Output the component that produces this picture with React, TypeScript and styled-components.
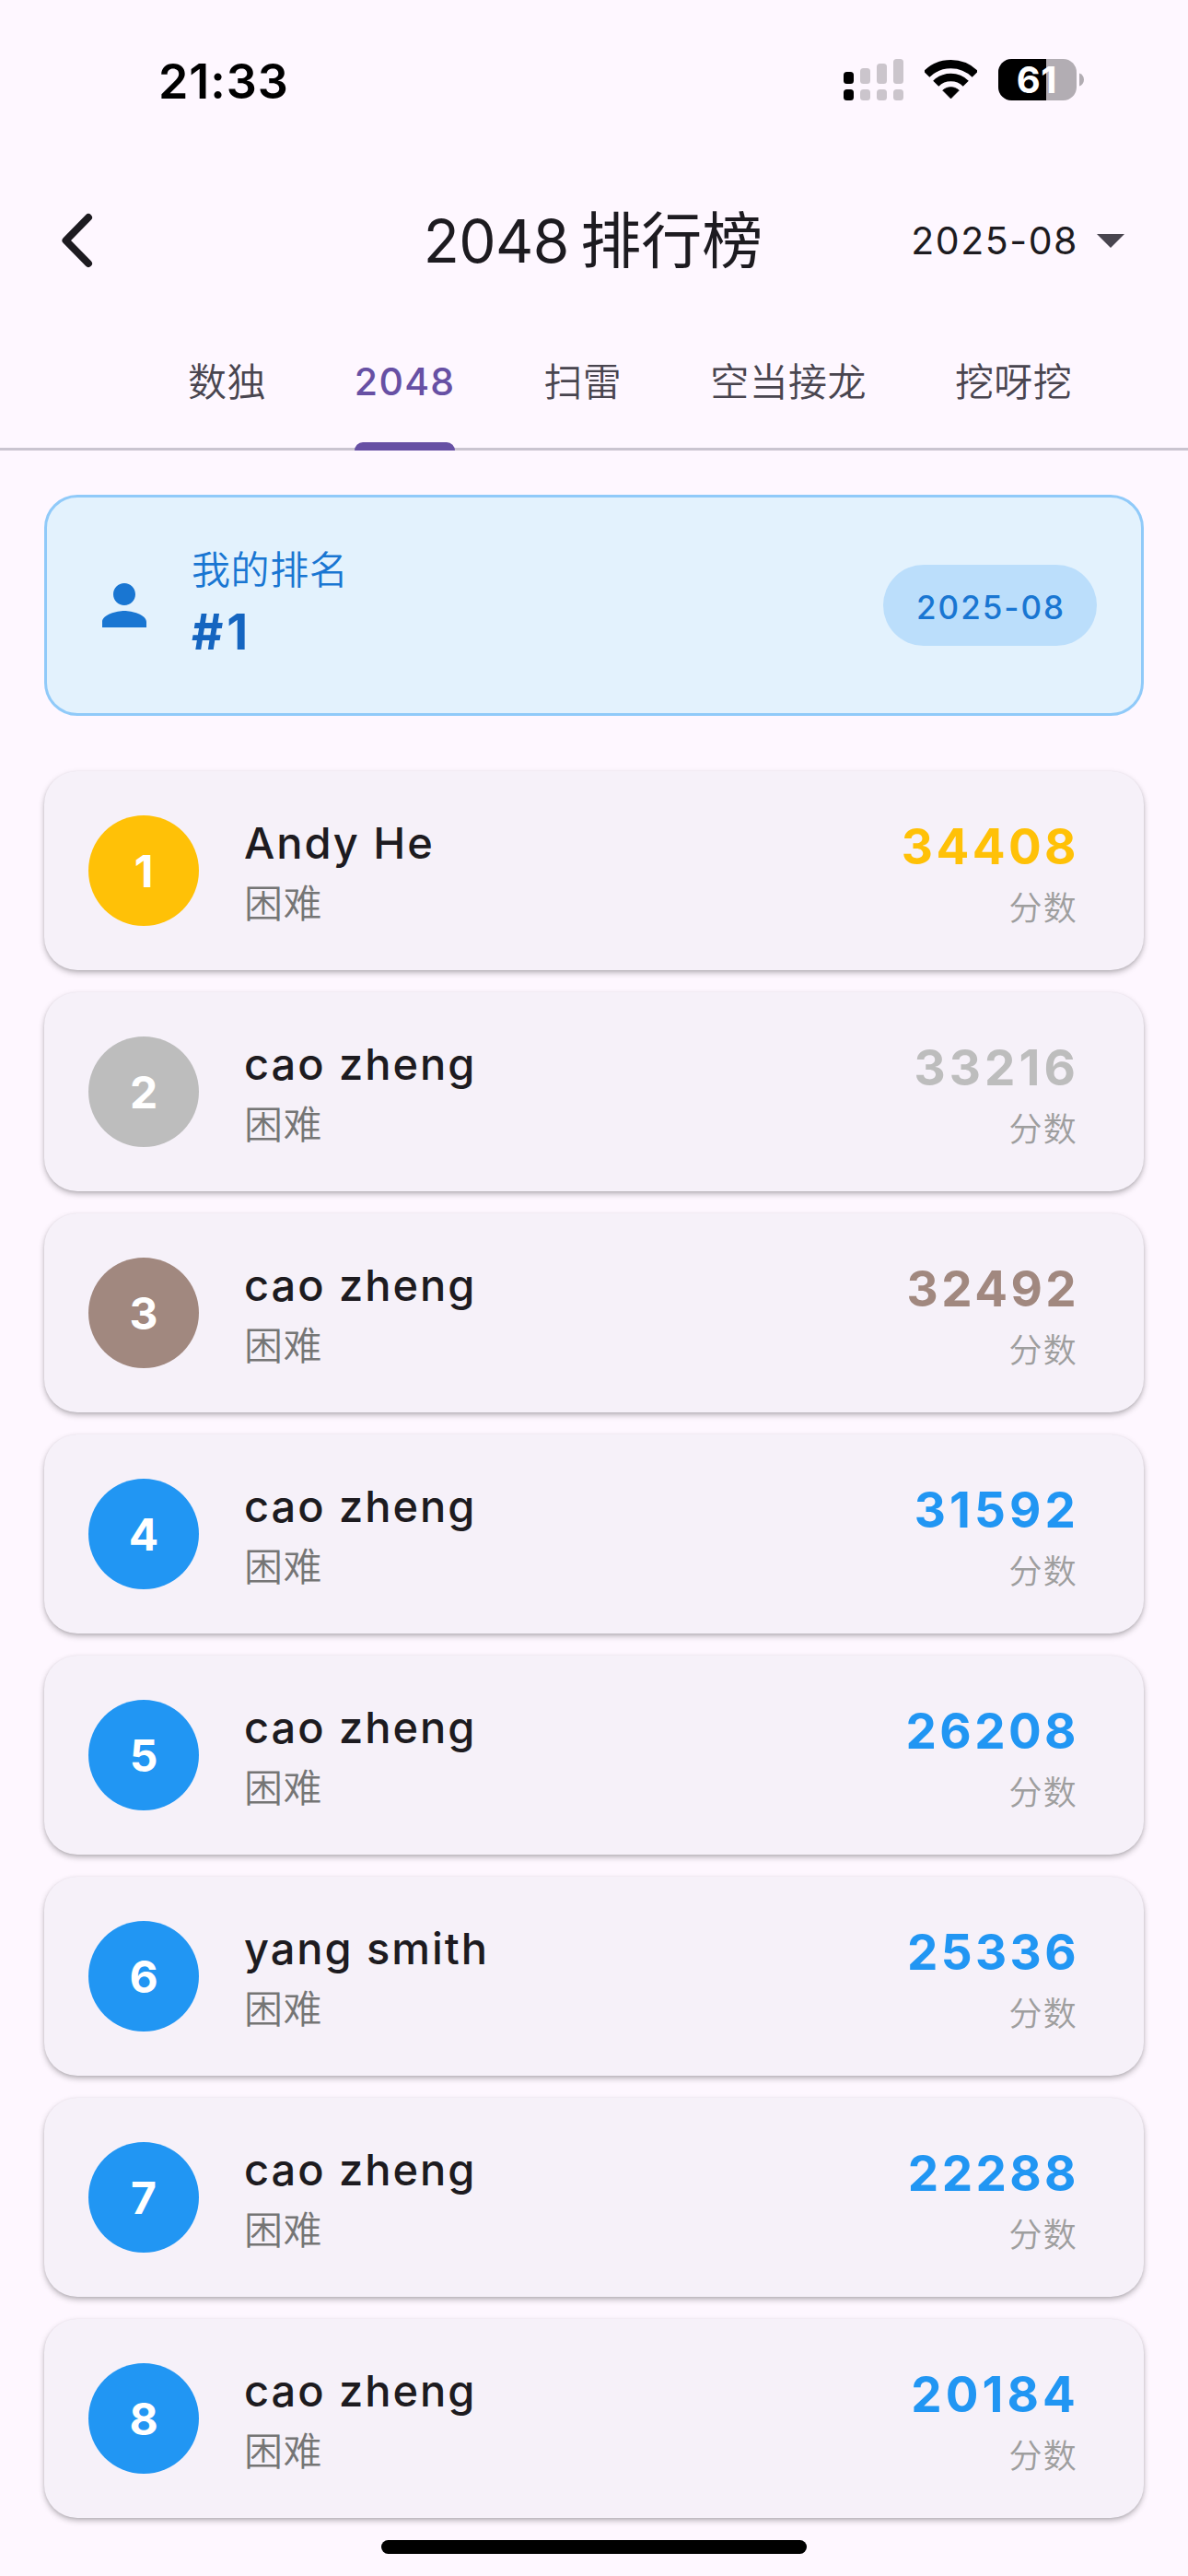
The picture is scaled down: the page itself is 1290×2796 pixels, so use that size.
import React from "react";
import styled, { createGlobalStyle } from "styled-components";

const GlobalStyle = createGlobalStyle`
  *, *::before, *::after { box-sizing: border-box; }
  body {
    margin: 0;
    background: #fef7ff;
    color: #1d1b20;
    font-family: Inter, "Noto Sans CJK SC", sans-serif;
  }
`;

const Screen = styled.main`
  display: flex;
  flex-direction: column;
  width: 1290px;
  height: 2796px;
  overflow: hidden;
  background: #fef7ff;
`;

/* Status bar */

const StatusBar = styled.header`
  display: flex;
  justify-content: space-between;
  align-items: flex-start;
  height: 177px;
  padding: 59px 113px 0 172px;
`;

const Clock = styled.time`
  font-size: 52px;
  font-weight: 600;
  line-height: 60px;
  letter-spacing: 0.9px;
  color: #000;
`;

const StatusIcons = styled.div`
  display: flex;
  align-items: center;
  gap: 23px;
  padding-top: 5px;
`;

const Battery = styled.svg`
  overflow: visible;
`;

/* App bar */

const AppBar = styled.nav`
  display: grid;
  grid-template-columns: 1fr auto 1fr;
  align-items: center;
  height: 168px;
  padding: 0 69px 0 66px;
`;

const BackButton = styled.button`
  display: flex;
  width: 36px;
  padding: 0;
  border: 0;
  background: none;
`;

const Title = styled.h1`
  margin: 0;
  padding: 1px 0 0 1px;
  font-size: 64px;
  font-weight: 400;
  line-height: 84px;
  letter-spacing: -0.6px;
  word-spacing: -5px;
  white-space: nowrap;
`;

const TitleHan = styled.span`
  font-size: 66px;
  letter-spacing: 0;
`;

const MonthSelect = styled.button`
  display: flex;
  align-items: center;
  justify-content: flex-end;
  gap: 20px;
  padding: 0;
  border: 0;
  background: none;
  color: inherit;
  font-family: inherit;
  font-size: 41px;
  line-height: 60px;
  letter-spacing: 1.55px;
`;

/* Tabs */

const TabBar = styled.div`
  display: flex;
  height: 144px;
  padding-left: 156px;
  box-shadow: inset 0 -3px 0 #cac4d0;
`;

const Tab = styled.div`
  display: flex;
  padding: 0 48px;
`;

const TabLabel = styled.span<{ $active?: boolean }>`
  display: flex;
  align-items: center;
  padding-bottom: ${(p) => (p.$active ? 0 : 12)}px;
  font-size: ${(p) => (p.$active ? 41 : 42)}px;
  font-weight: ${(p) => (p.$active ? 500 : 350)};
  letter-spacing: ${(p) => (p.$active ? 1.3 : 0.4)}px;
  color: ${(p) => (p.$active ? "#6750a4" : "#49454f")};
  ${(p) =>
    p.$active &&
    `
    flex-direction: column;
    justify-content: space-between;
    padding-top: 39px;
    line-height: 60px;
    &::after {
      content: "";
      width: 100%;
      height: 9px;
      border-radius: 9px 9px 0 0;
      background: #6750a4;
    }
  `}
`;

/* Own rank */

const Content = styled.section`
  display: flex;
  flex-direction: column;
  gap: 60px;
  padding: 48px 48px 0;
`;

const MyRank = styled.div`
  display: flex;
  align-items: center;
  height: 240px;
  padding: 0 48px;
  border: 3px solid #90caf9;
  border-radius: 36px;
  background: #e3f2fd;
`;

const MyRankText = styled.div`
  display: flex;
  flex: 1;
  flex-direction: column;
  margin-left: 37px;
  padding-bottom: 1px;
`;

const MyRankLabel = styled.span`
  font-size: 42px;
  font-weight: 350;
  line-height: 60px;
  letter-spacing: 0.6px;
  color: #1976d2;
`;

const MyRankValue = styled.strong`
  font-size: 53px;
  font-weight: 700;
  line-height: 75px;
  letter-spacing: 3.8px;
  color: #1565c0;
`;

const MonthBadge = styled.span`
  display: flex;
  align-items: center;
  justify-content: center;
  width: 232px;
  height: 88px;
  padding: 3px 0 0 2px;
  border-radius: 44px;
  background: #bbdefb;
  font-size: 35px;
  font-weight: 450;
  letter-spacing: 1.95px;
  color: #1976d2;
`;

/* Ranking list */

const List = styled.ol`
  display: flex;
  flex-direction: column;
  gap: 24px;
  margin: 0;
  padding: 0;
  list-style: none;
`;

const Row = styled.li`
  display: flex;
  align-items: center;
  height: 216px;
  padding: 0 72px 0 48px;
  border-radius: 36px;
  background: #f6f1f9;
  box-shadow: 0 3px 6px rgba(0, 0, 0, 0.26), 0 1px 3px rgba(0, 0, 0, 0.08);
`;

const Medal = styled.span<{ $color: string }>`
  display: flex;
  align-items: center;
  justify-content: center;
  width: 120px;
  height: 120px;
  border-radius: 50%;
  background: ${(p) => p.$color};
  font-size: 48px;
  font-weight: 700;
  color: #fff;
`;

const Player = styled.div`
  display: flex;
  flex: 1;
  flex-direction: column;
  margin-left: 49px;
`;

const PlayerName = styled.span`
  font-size: 47px;
  font-weight: 450;
  line-height: 72px;
  letter-spacing: 1.95px;
`;

const Difficulty = styled.span`
  font-size: 42px;
  font-weight: 350;
  line-height: 60px;
  letter-spacing: 0.4px;
  color: #757575;
`;

const ScoreBlock = styled.div`
  display: flex;
  flex-direction: column;
  align-items: flex-end;
  padding-bottom: 2px;
`;

const Score = styled.strong<{ $color: string; $tracking: number }>`
  margin-right: -2px;
  font-size: 53px;
  font-weight: 700;
  line-height: 84px;
  letter-spacing: ${(p) => p.$tracking}px;
  color: ${(p) => p.$color};
`;

const ScoreUnit = styled.span`
  font-size: 36px;
  font-weight: 350;
  line-height: 50px;
  letter-spacing: 1.2px;
  color: #9e9e9e;
`;

const HomeIndicator = styled.div`
  width: 462px;
  height: 15px;
  margin: 24px auto 0;
  border-radius: 8px;
  background: #000;
`;

/* Icons */

const SIGNAL_TOPS = [14, 10, 5, 0];

const SignalIcon = () => (
  <svg width="65" height="45" viewBox="0 0 65 45">
    {SIGNAL_TOPS.map((top, i) => (
      <g key={top} fill={i === 0 ? "#000" : "#cbc5cc"}>
        <rect x={i * 18} y={top} width="11" height={27 - top} rx="3.5" />
        <rect x={i * 18} y="33" width="11" height="12" rx="3.5" />
      </g>
    ))}
  </svg>
);

const WifiIcon = () => (
  <svg width="57" height="45" viewBox="0 0 57 45">
    <path d="M2.12 16.62A37.3 37.3 0 0 1 54.88 16.62" fill="none" stroke="#000" strokeWidth="9.2" />
    <path d="M12.24 26.74A23 23 0 0 1 44.76 26.74" fill="none" stroke="#000" strokeWidth="8.6" />
    <path d="M28.5 43L19.6 34.1A12.8 12.8 0 0 1 37.4 34.1Z" fill="#000" stroke="#000" strokeWidth="0.6" strokeLinejoin="round" />
  </svg>
);

const BatteryIcon = () => (
  <Battery width="93" height="45" viewBox="0 0 93 45">
    <defs>
      <clipPath id="battery-body">
        <rect width="85" height="45" rx="14.5" />
      </clipPath>
    </defs>
    <g clipPath="url(#battery-body)">
      <rect width="85" height="45" fill="#b2adb3" />
      <rect width="52" height="45" fill="#000" />
    </g>
    <path d="M88 15.5C91.2 16.6 93 19.3 93 22.5S91.2 28.4 88 29.5Z" fill="#b2adb3" />
    <text x="42" y="37" fill="#fff" fontFamily="Inter" fontSize="40" fontWeight="650" letterSpacing="0.6" textAnchor="middle">
      61
    </text>
  </Battery>
);

const BackIcon = () => (
  <svg width="36" height="60" viewBox="0 0 36 60">
    <path d="M30 5L5.5 30L30 55" fill="none" stroke="#1d1b20" strokeWidth="8" strokeLinecap="round" strokeLinejoin="round" />
  </svg>
);

const CaretIcon = () => (
  <svg width="30" height="15" viewBox="0 0 30 15">
    <path d="M0 0H30L15 15Z" fill="#49454f" />
  </svg>
);

const PersonIcon = () => (
  <svg width="72" height="72" viewBox="0 0 24 24" fill="#1976d2">
    <path d="M12 12c2.21 0 4-1.79 4-4s-1.79-4-4-4-4 1.79-4 4 1.79 4 4 4zm0 2c-2.67 0-8 1.34-8 4v2h16v-2c0-2.66-5.33-4-8-4z" />
  </svg>
);

/* Data */

const TABS = ["数独", "2048", "扫雷", "空当接龙", "挖呀挖"];
const ACTIVE_TAB = "2048";
const MONTH = "2025-08";

const MEDAL_COLORS = ["#ffc107", "#bdbdbd", "#a1887f"];
const DEFAULT_COLOR = "#2196f3";

const PLAYERS = [
  { name: "Andy He", score: 34408 },
  { name: "cao zheng", score: 33216 },
  { name: "cao zheng", score: 32492 },
  { name: "cao zheng", score: 31592 },
  { name: "cao zheng", score: 26208 },
  { name: "yang smith", score: 25336 },
  { name: "cao zheng", score: 22288 },
  { name: "cao zheng", score: 20184 },
];

/* A "1" is a narrow digit, so scores that hold one are tracked a little wider. */
const scoreTracking = (score: number) => (String(score).includes("1") ? 4.1 : 3.4);

export default function App() {
  return (
    <Screen>
      <GlobalStyle />
      <StatusBar>
        <Clock>21:33</Clock>
        <StatusIcons>
          <SignalIcon />
          <WifiIcon />
          <BatteryIcon />
        </StatusIcons>
      </StatusBar>

      <AppBar>
        <BackButton aria-label="返回">
          <BackIcon />
        </BackButton>
        <Title>
          2048 <TitleHan>排行榜</TitleHan>
        </Title>
        <MonthSelect>
          {MONTH}
          <CaretIcon />
        </MonthSelect>
      </AppBar>

      <TabBar>
        {TABS.map((label) => (
          <Tab key={label}>
            <TabLabel $active={label === ACTIVE_TAB}>{label}</TabLabel>
          </Tab>
        ))}
      </TabBar>

      <Content>
        <MyRank>
          <PersonIcon />
          <MyRankText>
            <MyRankLabel>我的排名</MyRankLabel>
            <MyRankValue>#1</MyRankValue>
          </MyRankText>
          <MonthBadge>{MONTH}</MonthBadge>
        </MyRank>

        <List>
          {PLAYERS.map((player, i) => {
            const color = MEDAL_COLORS[i] ?? DEFAULT_COLOR;
            return (
              <Row key={i}>
                <Medal $color={color}>{i + 1}</Medal>
                <Player>
                  <PlayerName>{player.name}</PlayerName>
                  <Difficulty>困难</Difficulty>
                </Player>
                <ScoreBlock>
                  <Score $color={color} $tracking={scoreTracking(player.score)}>
                    {player.score}
                  </Score>
                  <ScoreUnit>分数</ScoreUnit>
                </ScoreBlock>
              </Row>
            );
          })}
        </List>
      </Content>

      <HomeIndicator />
    </Screen>
  );
}
